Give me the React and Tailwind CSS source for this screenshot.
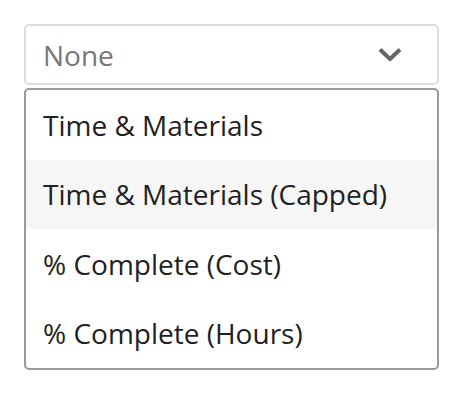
import React from 'react';

const options = [
  'Time & Materials',
  'Time & Materials (Capped)',
  '% Complete (Cost)',
  '% Complete (Hours)',
];

export default function App() {
  const active = 1;

  return (
    <div className="min-h-screen bg-white pt-[24px] pl-[24px] font-['Open_Sans',sans-serif]">
      <div className="w-[415px]">
        <div className="h-[61px] border-2 border-[#dddddd] rounded-[5px] flex items-center justify-between pl-[17px] pr-[35px]">
          <span className="text-[28px] leading-none text-[#777777]">None</span>
          <svg width="24" height="15" viewBox="0 0 24 15" fill="none">
            <path d="M2 2.5 L12 12 L22 2.5" stroke="#666666" strokeWidth="4" />
          </svg>
        </div>

        <div className="mt-[3px] border-2 border-[#999999] rounded-[5px] overflow-hidden">
          {options.map((opt, i) => (
            <div
              key={opt}
              className={
                i === active
                  ? 'h-[69.5px] flex items-center pl-[17px] bg-[#f6f6f6] text-[28px] leading-none text-[#222222]'
                  : 'h-[69.5px] flex items-center pl-[17px] text-[28px] leading-none text-[#222222]'
              }
            >
              {opt}
            </div>
          ))}
        </div>
      </div>
    </div>
  );
}
